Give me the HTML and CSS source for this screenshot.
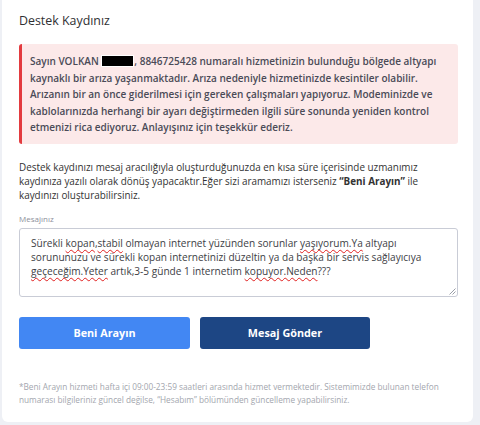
FILE: index.html
```html
<!DOCTYPE html>
<html lang="tr">
<head>
<meta charset="utf-8">
<link rel="stylesheet" href="styles.css">
</head>
<body>
<div class="card">
  <h1 class="title">Destek Kaydınız</h1>
  <div class="alert">Sayın VOLKAN <span class="redact"></span>, 8846725428 numaralı hizmetinizin bulunduğu bölgede altyapı kaynaklı bir arıza yaşanmaktadır. Arıza nedeniyle hizmetinizde kesintiler olabilir. Arızanın bir an önce giderilmesi için gereken çalışmaları yapıyoruz. Modeminizde ve kablolarınızda herhangi bir ayarı değiştirmeden ilgili süre sonunda yeniden kontrol etmenizi rica ediyoruz. Anlayışınız için teşekkür ederiz.</div>
  <p class="info">Destek kaydınızı mesaj aracılığıyla oluşturduğunuzda en kısa süre içerisinde uzmanımız kaydınıza yazılı olarak dönüş yapacaktır.Eğer sizi aramamızı isterseniz <b>“Beni Arayın”</b> ile kaydınızı oluşturabilirsiniz.</p>
  <div class="label">Mesajınız</div>
  <div class="textarea">Sürekli <span class="sp">kopan</span>,<span class="sp">stabil</span> olmayan internet yüzünden sorunlar <span class="sp">yaşıyorum.Ya</span> altyapı sorununuzu ve sürekli kopan internetinizi düzeltin ya da başka bir servis sağlayıcıya <span class="sp">geçeceğim.Yeter</span> artık,3-5 günde 1 internetim <span class="sp">kopuyor.Neden</span>???<svg class="grip" width="7" height="7" viewBox="0 0 7 7"><path d="M6.5 0.5 L0.5 6.5 M6.5 3.5 L3.5 6.5" stroke="#9a9ea8" stroke-width="1" fill="none"/></svg></div>
  <div class="buttons">
    <button class="btn btn-light">Beni Arayın</button>
    <button class="btn btn-dark">Mesaj Gönder</button>
  </div>
  <p class="note">*Beni Arayın hizmeti hafta içi 09:00-23:59 saatleri arasında hizmet vermektedir. Sistemimizde bulunan telefon numarası bilgileriniz güncel değilse, “Hesabım” bölümünden güncelleme yapabilirsiniz.</p>
</div>
</body>
</html>
```
FILE: styles.css
```css
* { box-sizing: border-box; }
html, body { margin: 0; padding: 0; }
body {
  background: #eef0f5;
  font-family: "Open Sans", "Liberation Sans", sans-serif;
  width: 480px;
  height: 425px;
  overflow: hidden;
}
.card {
  margin-left: 2px;
  width: 471px;
  height: 422px;
  background: #fff;
  border-radius: 0 0 6px 6px;
  padding: 11px 17px 0 15px;
}
.title {
  margin: 0;
  font-size: 12.4px;
  font-weight: 500;
  color: #2f3033;
  line-height: 20px;
  padding-left: 2px;
}
.alert {
  margin: 13px 0 0 2px;
  width: 439px;
  background: #fce9e9;
  border-left: 3px solid #e33b3f;
  border-radius: 3px;
  padding: 9px 14px 8px 8px;
  font-size: 10px;
  line-height: 16.6px;
  font-weight: 600;
  color: #4a4b57;
}
.redact {
  display: inline-block;
  width: 33px;
  height: 12px;
  background: #000;
  border: 1px solid #fff;
  vertical-align: -2px;
}
.info {
  margin: 16px 0 0 2px;
  font-size: 9.9px;
  line-height: 14px;
  color: #333;
  width: 440px;
}
.info b { font-weight: 700; }
.label {
  margin: 11px 0 0 2px;
  font-size: 8px;
  color: #8d909b;
  line-height: 12px;
}
.textarea {
  position: relative;
  margin: 3px 0 0 2px;
  width: 439px;
  height: 69px;
  border: 1px solid #c9ccd6;
  border-radius: 3px;
  padding: 7px 11px;
  font-size: 10.1px;
  line-height: 14px;
  color: #3d3e45;
}
.sp {
  text-decoration: underline wavy #e02020;
  text-decoration-thickness: 1px;
  text-underline-offset: 2px;
}
.grip {
  position: absolute;
  right: 1px;
  bottom: 1px;
}
.buttons {
  display: flex;
  gap: 10px;
  margin: 20px 0 0 2px;
}
.btn {
  height: 32px;
  border: none;
  border-radius: 3px;
  color: #fff;
  font-family: inherit;
  font-size: 10.8px;
  font-weight: 700;
}
.btn-light { width: 171px; background: #4287f3; }
.btn-dark { width: 170px; background: #1d4684; }
.note {
  margin: 31px 0 0 2px;
  font-size: 8.25px;
  line-height: 13px;
  color: #a3a6ae;
  width: 440px;
}
```
